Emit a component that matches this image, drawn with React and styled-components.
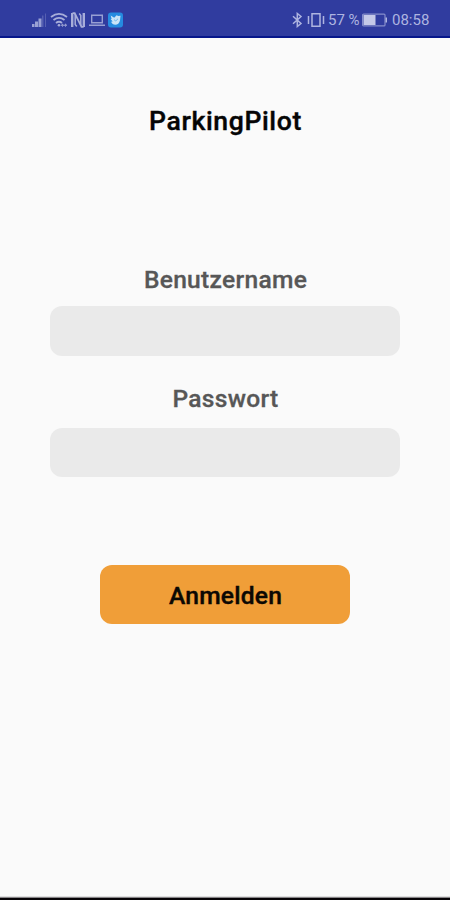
import React from 'react';
import styled, { createGlobalStyle } from 'styled-components';

const GlobalStyle = createGlobalStyle`
  * {
    box-sizing: border-box;
  }
  body {
    margin: 0;
    background: #fafafa;
    font-family: Roboto, 'Liberation Sans', sans-serif;
  }
`;
const Screen = styled.div`
  display: flex;
  flex-direction: column;
  width: 450px;
  height: 900px;
  background: #fafafa;
  border-bottom: 2px solid #050205;
  box-shadow: inset 0 -1px 0 #888588, inset 0 -2px 0 #dedede;
`;
const StatusBar = styled.header`
  display: flex;
  flex: none;
  align-items: center;
  justify-content: space-between;
  height: 38px;
  padding: 3px 20px 0 31px;
  background: #303c9f;
  border-bottom: 2px solid #07178b;
  color: #aeb4e0;
`;
const StatusGroup = styled.div`
  display: flex;
  align-items: center;
`;
const StatusIcon = styled.svg`
  display: block;
  flex: none;
  margin-right: ${props => props.$gap || 0}px;
`;
const StatusText = styled.span`
  width: ${props => props.$width}px;
  margin-right: ${props => props.$gap || 0}px;
  font-size: 15px;
  line-height: 18px;
  white-space: nowrap;
`;
const Login = styled.form`
  display: flex;
  flex-direction: column;
  align-items: center;
`;
const Title = styled.h1`
  margin: 67px 0 128px;
  padding-left: 1px;
  font-size: 26.6px;
  font-weight: 500;
  line-height: 32px;
  letter-spacing: 0.6px;
  color: #050505;
  -webkit-text-stroke: 0.4px #050505;
`;
const Label = styled.label`
  padding-left: 1px;
  font-size: 24.6px;
  font-weight: 500;
  line-height: 30px;
  letter-spacing: 0.28px;
  color: #575757;
  -webkit-text-stroke: 0.3px #575757;
`;
const Input = styled.input`
  width: 350px;
  height: ${props => props.$height}px;
  margin: ${props => props.$margin};
  padding: 0 14px;
  border: 0;
  border-radius: 12px;
  outline: 0;
  background: #eaeaea;
  font: 22px Roboto, sans-serif;
`;
const Button = styled.button`
  width: 250px;
  height: 59px;
  padding: 2px 0 0 1px;
  border: 0;
  border-radius: 12px;
  background: #f09e38;
  color: #0b0803;
  font-family: inherit;
  font-size: 24.6px;
  font-weight: 500;
  letter-spacing: 0.22px;
  -webkit-text-stroke: 0.4px #0b0803;
`;

function SignalIcon() {
  return (
    <StatusIcon $gap={3} width="16" height="16" viewBox="0 0 16 16" fill="#9aa1d5">
      <path d="M1 12h2.5v3H1zM4 9.5h3V15H4zM7.5 6.5h3V15h-3z" />
      <path d="M11 3.5h1.5V15H11zM14 1.5h1V15h-1z" opacity="0.35" />
    </StatusIcon>
  );
}

function WifiIcon() {
  return (
    <StatusIcon $gap={3} width="18" height="16" viewBox="0 0 18 16" fill="none" stroke="#a7add9" strokeWidth="1.8">
      <path d="M1 5Q9-1.2 17 5M3.5 8Q9 3.7 14.5 8M6 11Q9 8.5 12 11" />
      <circle cx="9" cy="13.3" r="1.3" fill="#a7add9" stroke="none" />
      <path d="M11.5 13.2h5M13 11.8l-1.5 1.4 1.5 1.4M15 11.8l1.5 1.4-1.5 1.4" strokeWidth="1" />
    </StatusIcon>
  );
}

function NfcIcon() {
  return (
    <StatusIcon $gap={4} width="14" height="16" viewBox="0 0 14 16" fill="none" stroke="#a7add9">
      <path d="M1.2 1v14M12.8 1v14" strokeWidth="2.4" />
      <path d="M4.2 2v10.5l1.6 2M9.8 14V3.5L8.2 1.5" strokeWidth="1.5" />
      <path d="M1.5 1.2h2.2l6.8 13.6h2.2" strokeWidth="1.8" />
    </StatusIcon>
  );
}

function LaptopIcon() {
  return (
    <StatusIcon $gap={3} width="16" height="16" viewBox="0 0 16 16" fill="none" stroke="#989fd3" strokeWidth="1.4">
      <path d="M2.7 3.2h10.6v7.5H2.7zM0 13.2h16" />
    </StatusIcon>
  );
}

function AppIcon() {
  return (
    <StatusIcon width="15" height="16" viewBox="0 0 15 16">
      <rect y="0.5" width="15" height="15" rx="3" fill="#258be0" />
      <path d="M2.7 3.5l3.5 2.3 2.4-2.5 1.6.6 2.3-.2-.5 4.5c-.6 3.1-2.5 4.5-4.6 4.5-2.2 0-3.5-1.2-4.3-3l1.5-.3-2-2.3 1-.2z" fill="#c9e4f7" />
      <path d="M6 7.7l1.8 1.2L10 6.8" fill="none" stroke="#73b9eb" />
    </StatusIcon>
  );
}

function BluetoothIcon() {
  return (
    <StatusIcon $gap={4} width="11" height="16" viewBox="0 0 11 16" fill="none" stroke="currentColor" strokeWidth="1.5">
      <path d="M1 4.2l8 7.3-3.7 3V1.5l3.7 3-8 7.3" />
    </StatusIcon>
  );
}

function VibrateIcon() {
  return (
    <StatusIcon $gap={3} width="18" height="16" viewBox="0 0 18 16" fill="none" stroke="currentColor" strokeWidth="1.5">
      <path d="M5 1.7h8v12.6H5zM1.5 4v8M16.5 4v8" />
    </StatusIcon>
  );
}

function BatteryIcon() {
  return (
    <StatusIcon $gap={4} width="26" height="14" viewBox="0 0 26 14">
      <rect x="0.6" y="1.1" width="22.4" height="11.8" rx="1" fill="none" stroke="#858dcb" strokeWidth="1.2" />
      <path d="M1.5 2h12v10h-12z" fill="#c4c8e8" />
      <path d="M23.5 4.5H25v5h-1.5z" fill="#aeb4e0" />
    </StatusIcon>
  );
}

function App() {
  return (
    <Screen>
      <GlobalStyle />
      <StatusBar>
        <StatusGroup>
          <SignalIcon />
          <WifiIcon />
          <NfcIcon />
          <LaptopIcon />
          <AppIcon />
        </StatusGroup>
        <StatusGroup>
          <BluetoothIcon />
          <VibrateIcon />
          <StatusText $width={31} $gap={3}>57 %</StatusText>
          <BatteryIcon />
          <StatusText $width={38}>08:58</StatusText>
        </StatusGroup>
      </StatusBar>
      <Login>
        <Title>ParkingPilot</Title>
        <Label htmlFor="username">Benutzername</Label>
        <Input id="username" $height={50} $margin="11px 0 28px" />
        <Label htmlFor="password">Passwort</Label>
        <Input id="password" type="password" $height={49} $margin="14px 0 88px" />
        <Button type="button">Anmelden</Button>
      </Login>
    </Screen>
  );
}

export default App;
